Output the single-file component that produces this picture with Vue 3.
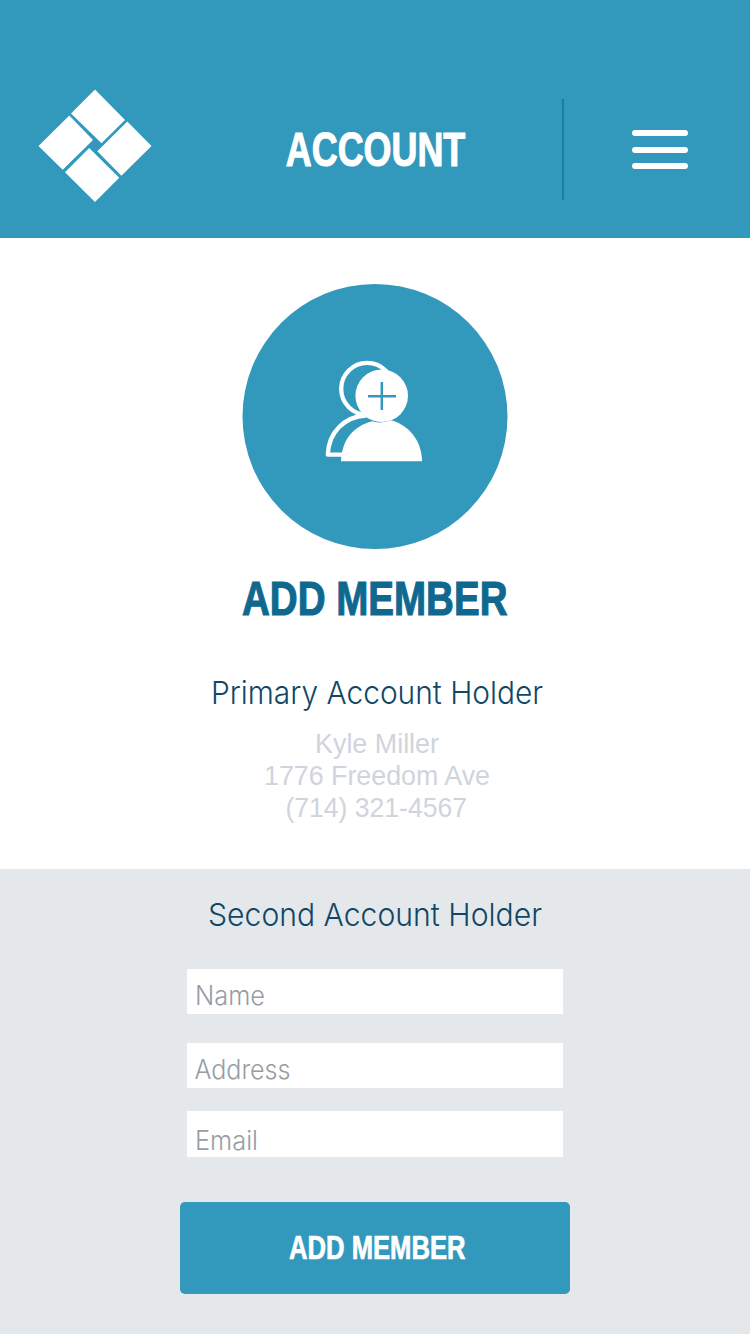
<script setup>
const holder = [
  { text: 'Kyle Miller', x: 315, w: 124 },
  { text: '1776 Freedom Ave', x: 264, w: 226 },
  { text: '(714) 321-4567', x: 285.5, w: 181.5 },
]
const fields = [
  { text: 'Name', w: 70, x: 8, y: 35.6, cls: 'name' },
  { text: 'Address', w: 96, x: 7.5, y: 36, cls: 'address' },
  { text: 'Email', w: 63, x: 8, y: 38.5, cls: 'email' },
]
</script>

<template>
  <main class="screen">
    <header class="header">
      <svg class="logo" viewBox="0 0 114 114">
        <path d="M57 .5 87 31 63.500 54.200 33 24.500ZM31.300 26.500 55 51 24.700 80.800.5 57ZM51.200 59 81.200 88.800 57 113 27 83.200ZM89.300 32.500 113.500 57 83.400 86.800 59.300 62.300Z" />
      </svg>
      <svg class="title" viewBox="0 0 200 60">
        <text class="condensed" x="10.800" y="45.700" font-size="47.500" textLength="179.500" lengthAdjust="spacingAndGlyphs">ACCOUNT</text>
      </svg>
      <i class="divider"></i>
      <div class="menu"><i></i><i></i><i></i></div>
    </header>

    <section class="primary">
      <svg class="avatar" viewBox="0 0 266 266">
        <circle class="disc" cx="133" cy="132.500" r="132.500" />
        <g transform="translate(-242 -284)">
          <circle class="outline" cx="367.200" cy="388.800" r="26" />
          <path class="outline" d="M342 454.700H327.800C328.500 433 344 416.500 366 415.500" />
          <circle class="solid" cx="381.700" cy="395.800" r="26.300" />
          <path class="solid" d="M341 461.200C342 439 354 426 372 421.200Q382 424 391.500 420.300C410 426 421.500 441 422.200 461.200Z" />
          <path class="plus" d="M368 396.200H396M381.800 382V410" />
        </g>
      </svg>
      <svg class="heading" viewBox="0 0 750 60">
        <text class="condensed" x="242" y="40.600" font-size="47.500" textLength="265.500" lengthAdjust="spacingAndGlyphs">ADD MEMBER</text>
      </svg>
      <svg class="sub" viewBox="0 0 750 50">
        <text class="light" x="211" y="33.600" font-size="31.500" textLength="332" lengthAdjust="spacingAndGlyphs">Primary Account Holder</text>
      </svg>
      <svg v-for="h in holder" :key="h.text" class="line" viewBox="0 0 750 32">
        <text class="regular" :x="h.x" y="24.600" font-size="27.500" :textLength="h.w" lengthAdjust="spacingAndGlyphs">{{ h.text }}</text>
      </svg>
    </section>

    <section class="second">
      <svg class="sub" viewBox="0 0 750 50">
        <text class="light" x="208" y="34" font-size="31.500" textLength="334" lengthAdjust="spacingAndGlyphs">Second Account Holder</text>
      </svg>
      <div v-for="f in fields" :key="f.text" class="field" :class="f.cls">
        <svg viewBox="0 0 376 46">
          <text class="light" :x="f.x" :y="f.y" font-size="26.500" :textLength="f.w" lengthAdjust="spacingAndGlyphs">{{ f.text }}</text>
        </svg>
      </div>
      <button class="submit">
        <svg viewBox="0 0 391 92">
          <text class="condensed" x="109" y="56.800" font-size="33" textLength="176.500" lengthAdjust="spacingAndGlyphs">ADD MEMBER</text>
        </svg>
      </button>
    </section>
  </main>
</template>

<style>
body { margin: 0; background: #fff; }
</style>

<style scoped>
.screen { width: 750px; height: 1334px; overflow: hidden; display: flex; flex-direction: column; }
svg { display: block; flex: none; overflow: visible; }
.header { box-sizing: border-box; height: 237.700px; flex: none; background: #3299bd; display: flex; align-items: flex-start; padding: 89px 0 0 38px; }
.logo { width: 114px; height: 114px; fill: #fff; }
.title { width: 200px; height: 60px; margin: 31px 0 0 123px; fill: #fff; }
.title .condensed { stroke: #fff; }
.divider { width: 1.500px; height: 101px; margin: 10px 0 0 87px; background: #187ca3; }
.menu { display: flex; flex-direction: column; gap: 10.400px; margin: 41.200px 0 0 68px; }
.menu i { width: 56px; height: 6px; border-radius: 3px; background: #fff; }
.condensed { font-family: "Liberation Sans Narrow", "Liberation Sans", Arial, sans-serif; font-weight: 700; stroke-width: 1.100px; }
.light { font-family: Inter, "Liberation Sans", sans-serif; font-weight: 300; }
.regular { font-family: "Liberation Sans", Arial, sans-serif; fill: #d0d4dc; }
.primary { height: 631.800px; flex: none; display: flex; flex-direction: column; align-items: center; }
.avatar { width: 266px; height: 266px; margin-top: 46.300px; }
.disc { fill: #3299bd; }
.outline { fill: none; stroke: #fff; stroke-width: 4.300; stroke-linejoin: round; }
.solid { fill: #fff; }
.plus { fill: none; stroke: #3299bd; stroke-width: 2.500; }
.heading { width: 750px; height: 60px; margin-top: 24.500px; fill: #11688f; }
.heading .condensed { stroke: #11688f; }
.sub { width: 750px; height: 50px; fill: #114766; }
.primary .sub { margin-top: 36px; margin-bottom: 8px; }
.line { width: 750px; height: 32px; }
.second { flex: 1; background: #e4e8eb; display: flex; flex-direction: column; align-items: center; }
.second .sub { margin-top: 22.500px; }
.field { width: 375.500px; height: 45.500px; flex: none; background: #fff; fill: #969da4; }
.field svg { width: 376px; height: 46px; }
.name { margin-top: 27px; }
.address { margin-top: 28.500px; }
.email { margin-top: 22.700px; }
.submit { width: 390.500px; height: 92px; margin-top: 45.300px; padding: 0; border: 0; border-radius: 5px; background: #3299bd; fill: #fff; flex: none; }
.submit svg { width: 391px; height: 92px; }
.submit .condensed { stroke: #fff; stroke-width: .7px; }
</style>
